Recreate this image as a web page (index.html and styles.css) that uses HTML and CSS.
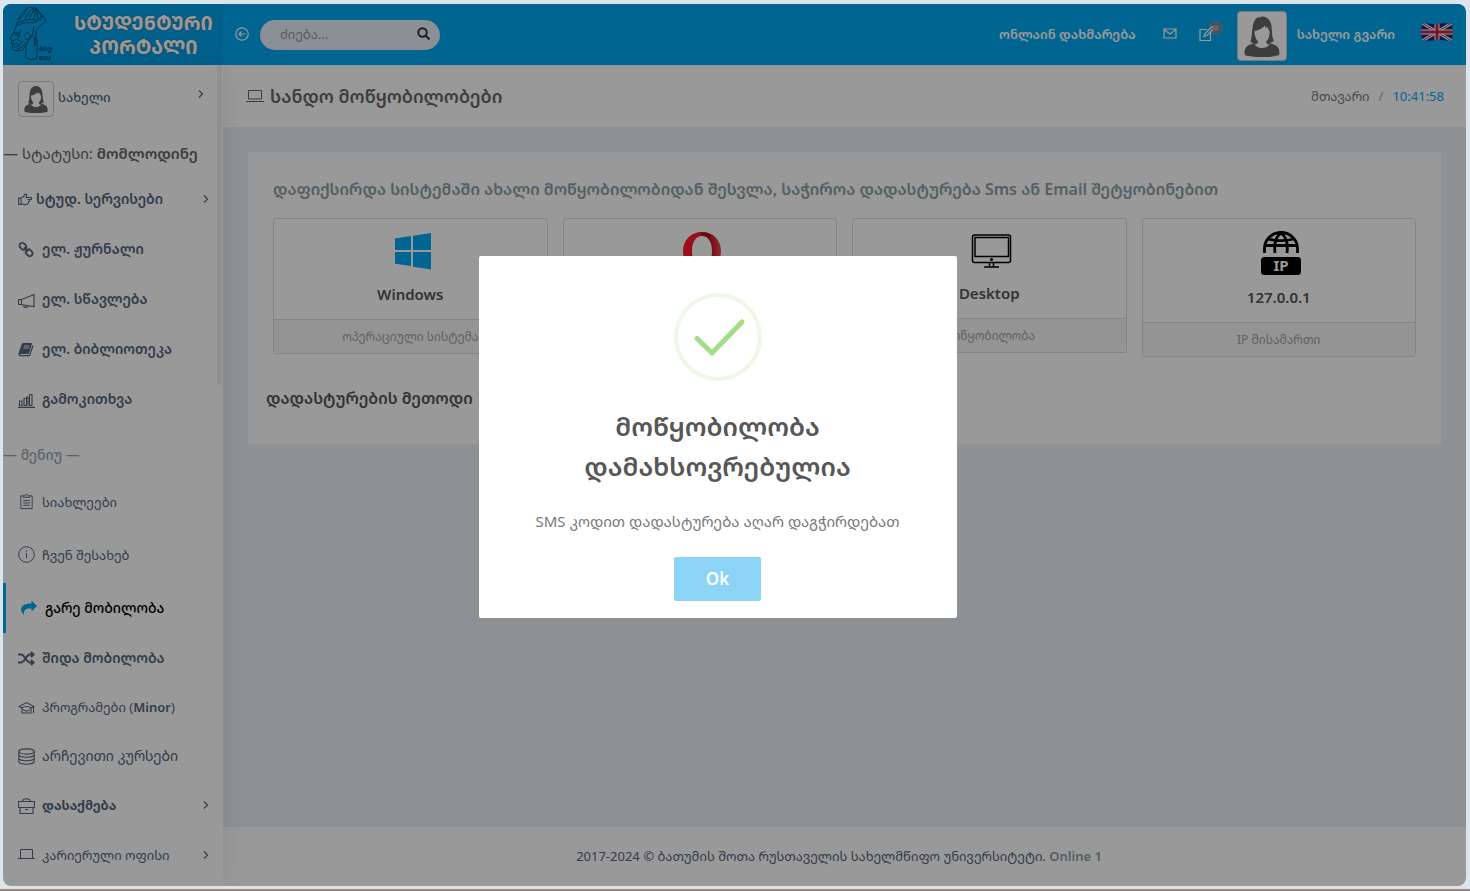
FILE: index.html
```html
<!DOCTYPE html>
<html lang="ka">
<head>
<meta charset="utf-8">
<title>სტუდენტური პორტალი</title>
<link rel="stylesheet" href="styles.css">
</head>
<body>
<svg class="defs" aria-hidden="true">
  <symbol id="person" viewBox="0 0 44 44">
    <path fill="#666" d="M4 42c-1-7 1-10 8-12l6-2c-3 2-8 2-8-1 2-4 1-8 2-13C13 5 16 2 21 2c3-2 11 2 11 11 1 5 0 9 2 13 1 3-4 4-8 2l6 2c7 2 9 5 8 12-9 3-27 3-36 0z"/>
    <path fill="#fff" d="M14 17c3-1 8-2 11-6l1 3 1-2c1 2 3 4 3 6 0 4-1 8-4 10 1 2 2 3 4 3-4 5-12 5-16 0 2 0 3-1 4-3-2-2-4-6-4-11z"/>
  </symbol>
  <symbol id="chev" viewBox="0 0 8 12"><path d="M2 2.500L5.500 6 2 9.500" fill="none" stroke="currentColor" stroke-width="1.2"/></symbol>
</svg>
<div class="window">
  <header class="topbar">
    <a class="brand" href="#">
      <svg class="emblem" viewBox="0 0 50 56" fill="none" stroke="#005076">
        <path d="M7 19C9 13 12 6 17 2c3-2 8-3 10-1 3 5 8 8 10 12-1 3-4 3-5 5l-5 6v5l-2 10M7 19c6-3 11-4 17-3l9-4M9 16c6-3 11-4 17-3l9-4M11 12c3-3 5-6 7-10M16 12c2-4 5-8 8-11M20 12c2-4 4-7 5-11M24 12c2-3 3-6 2-11M28 11c1-3 0-7-1-10M32 10c0-3-3-6-5-9"/>
        <path d="M7 19l-1 4-1 3-4 5 2 2-1 3 2 1-1 4c1 3 6 3 10 2 3-2 5-5 6-9l4-5 2-10M4 26l6 0M6 28h4M12 22c-2 3-1 6-3 9M3 34c3-2 7-2 9 1M4 37h6M5 40c4 0 7-2 9-6M8 42c4-1 7-3 9-7M15 29c1-4 6-4 6 0s-4 5-5 2M16 38c2 4 1 9 0 12 4 3 8 3 12 1V31M24 29c3 2 0 6 3 9"/>
        <text x="30" y="44" font-size="7" font-weight="700">ბსუ</text>
        <text x="30" y="53" font-size="6" font-weight="700">BSU</text>
      </svg>
      <span class="brand-text">ᲡᲢᲣᲓᲔᲜᲢᲣᲠᲘ<br>ᲞᲝᲠᲢᲐᲚᲘ</span>
    </a>
    <button class="icon-btn collapse" aria-label="მენიუს ჩაკეცვა"><svg width="14" height="14" viewBox="0 0 14 14" fill="none" stroke="currentColor" stroke-width="1.2"><circle cx="7" cy="7" r="6.200"/><path d="M10.500 7H4M6.500 4.500L4 7l2.500 2.500"/></svg></button>
    <form class="search">
      <input type="text" placeholder="ძიება..." aria-label="ძიება">
      <button type="button" aria-label="ძებნა"><svg width="13" height="13" viewBox="0 0 13 13" fill="none" stroke="currentColor" stroke-width="2"><circle cx="5.500" cy="5.500" r="4.200"/><path d="M8.500 8.500l4 4"/></svg></button>
    </form>
    <nav class="top-nav">
      <a class="help" href="#">ონლაინ დახმარება</a>
      <a href="#" aria-label="ფოსტა"><svg width="14" height="11" viewBox="0 0 14 11" fill="none" stroke="currentColor" stroke-width="1.200"><path d="M1 1h12v9H1zM1 1.500l6 4.500 6-4.500"/></svg></a>
      <a class="notes" href="#" aria-label="ჩანაწერები"><svg width="26" height="24" viewBox="0 0 26 24" fill="none"><circle cx="17" cy="8" r="6.200" stroke="#8a8f9c" stroke-opacity=".7" stroke-width="2.400"/><path d="M8 9.500H1v11h10.500v-8M5 16.500l1-3 7-7 2 2-7 7z" stroke="currentColor" stroke-width="1.200"/><circle cx="17" cy="8" r="3.300" fill="#fa8165"/></svg></a>
      <a class="profile" href="#"><span class="avatar avatar-lg"><svg><use href="#person"/></svg></span>სახელი გვარი</a>
      <button class="icon-btn" aria-label="English"><svg width="32" height="18" viewBox="0 0 32 18"><path id="flag" fill="#1d2a78" d="M1 1c5-2 10 1 15 0s10-1 15 0l1 8-1 8c-5 2-10-1-15 0s-10 1-15 0L0 9z"/><clipPath id="fc"><use href="#flag"/></clipPath><g clip-path="url(#fc)"><path d="M1 0l30 18M31 0L1 18" stroke="#fff" stroke-width="3"/><path d="M1 0l30 18M31 0L1 18" stroke="#d02040" stroke-width="1"/><path d="M16 0v18M0 9h32" stroke="#fff" stroke-width="5"/><path d="M16 0v18M0 9h32" stroke="#d02040" stroke-width="3"/></g></svg></button>
    </nav>
  </header>
  <div class="body">
    <aside class="sidebar">
      <a class="user" href="#"><span class="avatar"><svg><use href="#person"/></svg></span><span>სახელი</span><svg class="chev"><use href="#chev"/></svg></a>
      <p class="status">— სტატუსი: <b>მომლოდინე</b></p>
      <nav class="menu">
        <a class="semi tight" href="#"><svg class="ico-sm" viewBox="0 0 14 13" fill="none" stroke="currentColor" stroke-width="1.100"><path d="M.6 5h2.400v6.500H.6zM3 5c2 0 3-2 4-4 2 0 2 1 1 3.500h5c1 0 1 2 0 2h-3.500M11 6.500c1 .5.500 2-.5 2 .5 1 0 2-1 2 0 .8-.5 1.200-1.500 1.200-2 0-3-.700-5-.7"/></svg>სტუდ. სერვისები<svg class="chev"><use href="#chev"/></svg></a>
        <a class="semi" href="#"><svg viewBox="0 0 17 17" fill="none" stroke="currentColor" stroke-width="1.800"><rect x="1.500" y="2.500" width="7" height="5.500" rx="2.500" transform="rotate(45 5 5)"/><rect x="7.500" y="9" width="7" height="5.500" rx="2.500" transform="rotate(45 11 12)"/><path d="M6 6.500l4 4"/></svg>ელ. ჟურნალი</a>
        <a class="semi" href="#"><svg viewBox="0 0 17 17" fill="none" stroke="currentColor" stroke-width="1.100"><path d="M.6 8v5.500h2L16 15.500V3.500L3.500 8.500H.6M3.500 8.500v5M5.500 14c0 3.200 4.500 3 4.500.7"/></svg>ელ. სწავლება</a>
        <a class="semi" href="#"><svg viewBox="0 0 17 17"><path fill="currentColor" d="M5.500 2h7.300c1 0 1.300.6 1 1.500l-2.600 8.200c-.3.900-.8 1.300-1.700 1.300H2.500c-.6 0-.6 1 .2 1h7.600c.7 0 1-.2 1.300-1L14.500 4c.9.400.9 1 .7 1.700l-2.700 8.300c-.3.800-.9 1.200-1.700 1.200H2.500C1 15.200 0 13.800.5 12.300L3.600 3.500C3.900 2.500 4.500 2 5.500 2z"/><path d="M6 5h5.500M5.300 7h5.500" stroke="#fff" stroke-width=".9"/></svg>ელ. ბიბლიოთეკა</a>
        <a class="semi" href="#"><svg viewBox="0 0 17 17" fill="none" stroke="currentColor" stroke-width="1.100"><path d="M0 16.400h17M1.500 14.500V10H4v4.500zM6 14.500v-7h2.500v7zM8.500 14.500V6H10v8.500M11.500 14.500v-11H14v11z"/></svg>გამოკითხვა</a>
        <p class="label">— მენიუ —</p>
        <a class="tall" href="#"><svg viewBox="0 0 17 18" fill="none" stroke="currentColor"><path d="M5 3H2.500v13.500h12V3H12M5 4.500V3h2c0-2.500 3-2.500 3 0h2v1.500zM5 8h7M5 10.500h7M5 13h7"/></svg>სიახლეები</a>
        <a class="tall" href="#"><svg viewBox="0 0 17 17" fill="none" stroke="currentColor"><circle cx="8.500" cy="8.500" r="7.800"/><path d="M8.500 7v5M8.500 4.500v1.200"/></svg>ჩვენ შესახებ</a>
        <a class="active" href="#"><svg viewBox="0 0 17 16"><path fill="#03a9f3" d="M10.500 0L16 5.500 10.500 11V8C5 7.500 2.500 9 3 14.500 1 12.500 0 10.500 0 8.500 1 4.500 4.500 3 10.500 3z"/></svg>გარე მობილობა</a>
        <a class="semi" href="#"><svg viewBox="0 0 17 16" fill="none" stroke="currentColor" stroke-width="2"><path d="M0 4h3c4 0 5 8 9 8h3M0 12h3c4 0 5-8 9-8h3M13 1.500L15.500 4 13 6.500M13 9.500l2.500 2.500L13 14.500"/></svg>შიდა მობილობა</a>
        <a class="short" href="#"><svg viewBox="0 0 17 16" fill="none" stroke="currentColor" stroke-width="1.100"><path d="M4 8.500L1 7l7.500-4L16 7l-3 1.500M4 8.500c2-2 7-2 9 0v5H4zM15.500 7v6.500M5 10c2 2.200 5 2.200 7 0"/></svg><span>პროგრამები (<b>Minor</b>)</span></a>
        <a class="short large" href="#"><svg viewBox="0 0 17 17" fill="none" stroke="currentColor" stroke-width="1.100"><ellipse cx="8.500" cy="3.500" rx="7.700" ry="2.600"/><path d="M.8 3.500v10c0 3.600 15.400 3.600 15.400 0v-10M.8 6.500c0 3.600 15.400 3.600 15.400 0M.8 10c0 3.600 15.400 3.600 15.400 0"/></svg>არჩევითი კურსები</a>
        <a class="bold short" href="#"><svg viewBox="0 0 17 17" fill="none" stroke="currentColor" stroke-width="1.100"><path d="M.6 4.500h15.800v6H.6zM2 10.500v6h13v-6M4.500 4.500C5 .8 12 .8 12.500 4.500M7 12.500h3"/></svg>დასაქმება<svg class="chev"><use href="#chev"/></svg></a>
        <a href="#"><svg viewBox="0 0 17 17" fill="none" stroke="currentColor"><path d="M2.500 11.500V2.500h12v9M0 11.500h17"/></svg>კარიერული ოფისი<svg class="chev"><use href="#chev"/></svg></a>
      </nav>
      <div class="scroll-thumb"></div>
    </aside>
    <main class="page">
      <div class="title-bar">
        <h1><svg width="20" height="16" viewBox="0 0 20 16" fill="none" stroke="currentColor"><path d="M3.500 11V2.500h13V11zM1 13.500h18" /></svg>სანდო მოწყობილობები</h1>
        <div class="crumbs"><a href="#">მთავარი</a><span>/</span><time>10:41:58</time></div>
      </div>
      <section class="panel">
        <div class="devices">
          <h2>დაფიქსირდა სისტემაში ახალი მოწყობილობიდან შესვლა, საჭიროა დადასტურება Sms ან Email შეტყობინებით</h2>
          <div class="grid">
            <article class="device"><div class="device-main"><svg width="42" height="42" viewBox="0 0 42 42" fill="#03a9f3"><path d="M6 8.500L22 6v14H6zM24 5.700L42 3v17H24zM6 22h16v14L6 33.700zM24 22h18v17.500L24 36.700z"/></svg><h3>Windows</h3></div><p>ოპერაციული სისტემა</p></article>
            <article class="device"><div class="device-main"><svg width="42" height="42" viewBox="0 0 42 42"><defs><linearGradient id="op" x1="0" x2="1"><stop offset=".4" stop-color="#ff1b2d"/><stop offset=".6" stop-color="#a70014"/><stop offset="1" stop-color="#f04848"/></linearGradient></defs><path fill="url(#op)" fill-rule="evenodd" d="M23 2c11 0 19 8 19 19s-8 19-19 19S4 32 4 21 12 2 23 2zm0 4c-6 0-10 6-10 15s4 15 10 15 10-6 10-15S29 6 23 6z"/></svg><h3>Opera</h3></div><p>ბრაუზერი</p></article>
            <article class="device"><div class="device-main"><svg width="46" height="41" viewBox="0 0 46 41" fill="none" stroke="#000" stroke-width="1.500"><rect x="6.500" y="5" width="38" height="27.500" rx="2"/><path d="M9 7.500h33.500v19H9zM23.500 32.500v4M27.500 32.500v4M18 37h15"/><circle cx="25.500" cy="29.500" r=".8"/></svg><h3>Desktop</h3></div><p>მოწყობილობა</p></article>
            <article class="device"><div class="device-main"><svg width="46" height="45" viewBox="0 0 46 45"><rect x="5" y="27" width="40" height="18" rx="3.500"/><path d="M8.500 23v-4.500a16.500 16 0 0 1 33 0V23M19 23c-1-9 0-16 6-20 6 4 7 11 6 20M8 15.500h34M12 9c8 2 18 2 26 0" fill="none" stroke="#000" stroke-width="2.800"/><text class="ip-text" x="25" y="41">IP</text></svg><h3>127.0.0.1</h3></div><p>IP მისამართი</p></article>
          </div>
        </div>
        <h2 class="method">დადასტურების მეთოდი</h2>
      </section>
      <footer>2017-2024 © ბათუმის შოთა რუსთაველის სახელმწიფო უნივერსიტეტი. <b>Online 1</b></footer>
    </main>
  </div>
  <div class="overlay">
    <div class="dialog" role="dialog" aria-labelledby="dlg-title">
      <svg class="tick" width="88" height="88" viewBox="0 0 88 88" fill="none"><circle cx="44" cy="44" r="42" stroke="#edf8e7" stroke-width="4"/><path d="M23 45.500l15 14.500 30-31" stroke="#a5dc86" stroke-width="5" stroke-linecap="round" stroke-linejoin="round"/></svg>
      <h2 id="dlg-title">მოწყობილობა დამახსოვრებულია</h2>
      <p>SMS კოდით დადასტურება აღარ დაგჭირდებათ</p>
      <button type="button">Ok</button>
    </div>
  </div>
</div>
</body>
</html>
```
FILE: styles.css
```css
* { box-sizing: border-box; }
body {
  margin: 0;
  min-height: 100vh;
  display: flex;
  padding: 4px 4px 3px 3px;
  background: #dae5ee;
  border-bottom: 2px solid #a08678;
  font: 13px/20px "Noto Sans", "Noto Sans Georgian", "Open Sans", "DejaVu Sans", sans-serif;
  color: #54667a;
}
h1, h2, h3, p { margin: 0; }
a { color: inherit; text-decoration: none; }
svg { flex: none; }
b { font-weight: 600; }
button { border: 0; padding: 0; background: none; color: inherit; font: inherit; }
.defs { position: absolute; width: 0; height: 0; }

.window {
  position: relative;
  flex: 1;
  display: flex;
  flex-direction: column;
  border-radius: 8px;
  overflow: hidden;
  background: #ecf2f5;
}

/* Top bar */
.topbar { display: flex; align-items: center; height: 61px; background: #03a9f3; color: #fff; }
.brand { display: flex; align-items: center; justify-content: space-between; width: 220px; height: 61px; padding: 0 10px 0 6px; background: #02a2ea; }
.emblem { width: 50px; height: 56px; }
.emblem text { fill: #005076; stroke: none; }
.brand-text { font-size: 19px; line-height: 24px; font-weight: 700; text-align: center; text-shadow: 0 0 2px #555; }
.icon-btn { display: flex; }
.collapse { margin: 0 11px 2px 12px; }
.search { display: flex; align-items: center; width: 180px; height: 30px; padding: 0 10px 2px 20px; border-radius: 15px; background: #e6f1f8; }
.search input { flex: 1; min-width: 0; border: 0; padding: 0; background: none; font: inherit; outline: 0; }
.search input::placeholder { color: #8d98a3; opacity: 1; }
.search button { display: flex; color: #313131; }
.top-nav { flex: 1; display: flex; align-items: center; justify-content: flex-end; padding: 0 13px 2px 0; font-weight: 600; }
.help { margin-right: 27px; }
.top-nav > a { display: flex; align-items: center; }
.notes { margin: 0 12px 4px 22px; }
.profile { gap: 10px; margin-right: 26px; }
.avatar { display: flex; width: 36px; height: 36px; padding: 3px; border: 1px solid #ccc; border-radius: 4px; background: #fff; }
.avatar svg { width: 100%; height: 100%; }
.avatar-lg { width: 50px; height: 50px; margin-top: 4px; }
.top-nav .icon-btn { margin-bottom: 4px; }

/* Sidebar */
.body { flex: 1; display: flex; }
.sidebar { position: relative; width: 220px; background: #fff; box-shadow: 1px 0 20px rgba(0, 0, 0, .08); }
.user { display: flex; align-items: center; gap: 4px; height: 69px; padding: 0 18px 6px 15px; font-weight: 500; }
.user .avatar { margin-top: 4px; }
.chev { width: 8px; height: 12px; margin-left: auto; }
.user .chev { margin-bottom: 6px; }
.status { height: 40px; font-size: 15px; line-height: 38px; color: #666; white-space: nowrap; }
.menu a { display: flex; align-items: center; gap: 7px; height: 50px; padding: 0 13px 0 15px; white-space: nowrap; }
.menu a > svg:first-child { width: 17px; height: 17px; }
.menu a.tight { gap: 4px; }
.menu a > svg.ico-sm:first-child { width: 14px; height: 13px; }
.menu a.semi { font-size: 14px; font-weight: 600; }
.menu a.bold { font-weight: 700; }
.menu a.tall { height: 53px; padding-bottom: 4px; }
.menu a.short { height: 49px; padding-bottom: 1px; }
.menu a.large { font-size: 14px; }
.menu a.active { border-left: 3px solid #03a9f3; font-size: 14px; font-weight: 500; color: #000; }
.label { height: 53px; padding-top: 8px; font-size: 14px; line-height: 46px; font-weight: 500; color: #98a6ad; }
.scroll-thumb { position: absolute; top: 0; right: 1px; width: 5px; height: 320px; border-radius: 0 0 5px 5px; background: #f1f1f1; }

/* Page */
.page { flex: 1; display: flex; flex-direction: column; min-width: 0; }
.title-bar { display: flex; align-items: center; justify-content: space-between; height: 62px; padding: 0 22px; background: #fff; }
.title-bar h1 { display: flex; align-items: center; gap: 5px; font-size: 18px; font-weight: 600; color: #686868; }
.crumbs { display: flex; gap: 9px; color: #98a6ad; }
.crumbs a { color: #777; }
.crumbs time { color: #03a9f3; }
.panel { margin: 25px; padding: 25px 18px 34px; background: #fff; }
.devices { padding: 0 7px; }
.panel h2 { font-size: 16px; line-height: 24px; font-weight: 600; color: #8d9ea7; }
.grid { display: grid; grid-template-columns: repeat(4, 1fr); align-items: start; gap: 15px; margin-top: 17px; }
.device { border: 1px solid #dcdcdc; border-radius: 3px; text-align: center; }
.device-main { padding: 11px 0 14px; }
.device-main svg { display: block; margin: 0 auto; }
.ip-text { fill: #fff; font-size: 15px; font-weight: 700; text-anchor: middle; }
.device h3 { margin-top: 11px; font-size: 15px; line-height: 22px; font-weight: 600; color: #555; }
.device p { border-top: 1px solid #dcdcdc; background: #f7f7f7; font-size: 12px; line-height: 33px; color: #98a6ad; }
.panel .method { margin-top: 29px; color: #555; }
footer { margin-top: auto; padding: 19px 11px 20px 0; background: #fff; text-align: center; }
footer b { color: #8d9ea7; }

/* Dialog */
.overlay { position: absolute; inset: 0; display: flex; align-items: center; justify-content: center; padding: 0 33px 16px 0; background: rgba(0, 0, 0, .4); }
.dialog { display: flex; flex-direction: column; align-items: center; width: 478px; padding: 37px 18px 17px 17px; border-radius: 2px; background: #fff; text-align: center; }
.dialog h2 { max-width: 300px; margin-top: 25px; font-size: 26px; line-height: 40px; font-weight: 600; color: #575757; }
.dialog p { margin-top: 22px; font-size: 15px; line-height: 26px; color: #797979; }
.dialog button { margin-top: 23px; width: 87px; height: 44px; border-radius: 2px; background: #8cd4f5; color: #fff; font-size: 17px; font-weight: 600; }
```
